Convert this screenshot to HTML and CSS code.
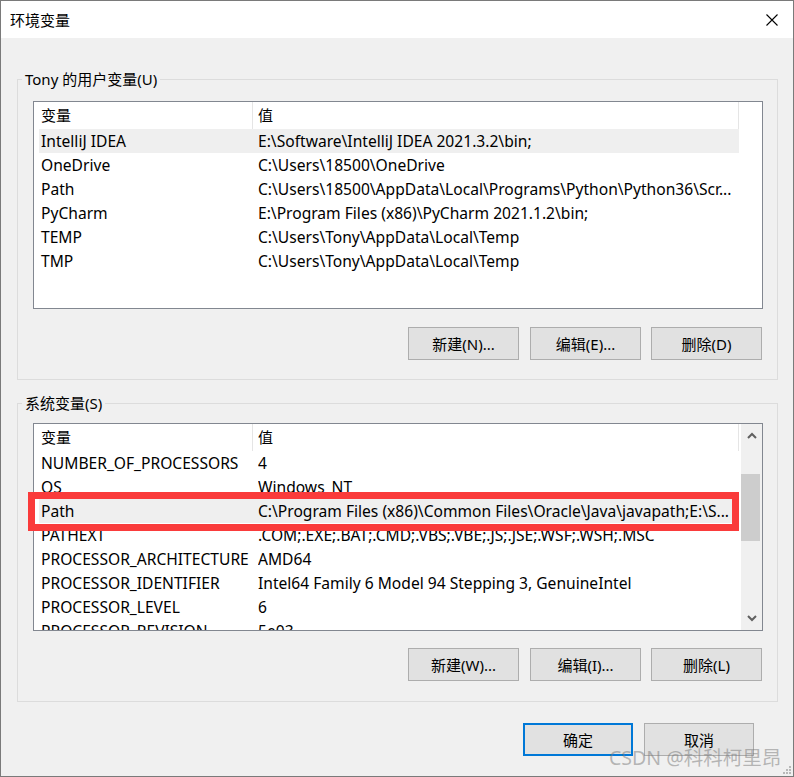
FILE: index.html
```html
<!DOCTYPE html>
<html lang="zh-CN">
<head>
<meta charset="utf-8">
<title>环境变量</title>
<link rel="stylesheet" href="styles.css">
</head>
<body>
<div class="window">
  <div class="titlebar">
    <span class="title">环境变量</span>
    <span class="close">
      <svg width="12" height="12" viewBox="0 0 12 12"><path d="M0.5 0.5 L11.5 11.5 M11.5 0.5 L0.5 11.5" stroke="#000" stroke-width="1.1" fill="none"/></svg>
    </span>
  </div>
  <div class="content">
    <fieldset class="group group-user">
      <legend>Tony 的用户变量(U)</legend>
      <div class="list">
        <div class="rows">
          <div class="head"><div class="h-name">变量</div><div class="h-val">值</div></div>
          <div class="row sel"><div class="c-name">IntelliJ IDEA</div><div class="c-val">E:\Software\IntelliJ IDEA 2021.3.2\bin;</div></div>
          <div class="row"><div class="c-name">OneDrive</div><div class="c-val">C:\Users\18500\OneDrive</div></div>
          <div class="row"><div class="c-name">Path</div><div class="c-val">C:\Users\18500\AppData\Local\Programs\Python\Python36\Scr...</div></div>
          <div class="row"><div class="c-name">PyCharm</div><div class="c-val">E:\Program Files (x86)\PyCharm 2021.1.2\bin;</div></div>
          <div class="row"><div class="c-name">TEMP</div><div class="c-val">C:\Users\Tony\AppData\Local\Temp</div></div>
          <div class="row"><div class="c-name">TMP</div><div class="c-val">C:\Users\Tony\AppData\Local\Temp</div></div>
        </div>
      </div>
      <div class="btns">
        <button class="btn">新建(N)...</button>
        <button class="btn">编辑(E)...</button>
        <button class="btn">删除(D)</button>
      </div>
    </fieldset>

    <fieldset class="group group-sys">
      <legend>系统变量(S)</legend>
      <div class="list list-sys">
        <div class="rows">
          <div class="head"><div class="h-name">变量</div><div class="h-val">值</div></div>
          <div class="row"><div class="c-name">NUMBER_OF_PROCESSORS</div><div class="c-val">4</div></div>
          <div class="row"><div class="c-name">OS</div><div class="c-val">Windows_NT</div></div>
          <div class="row sel"><div class="c-name">Path</div><div class="c-val">C:\Program Files (x86)\Common Files\Oracle\Java\javapath;E:\S...</div></div>
          <div class="row"><div class="c-name">PATHEXT</div><div class="c-val">.COM;.EXE;.BAT;.CMD;.VBS;.VBE;.JS;.JSE;.WSF;.WSH;.MSC</div></div>
          <div class="row"><div class="c-name">PROCESSOR_ARCHITECTURE</div><div class="c-val">AMD64</div></div>
          <div class="row"><div class="c-name">PROCESSOR_IDENTIFIER</div><div class="c-val">Intel64 Family 6 Model 94 Stepping 3, GenuineIntel</div></div>
          <div class="row"><div class="c-name">PROCESSOR_LEVEL</div><div class="c-val">6</div></div>
          <div class="row"><div class="c-name">PROCESSOR_REVISION</div><div class="c-val">5e03</div></div>
        </div>
        <div class="vscroll">
          <div class="arrow">
            <svg width="10" height="7" viewBox="0 0 10 7"><path d="M1 6 L5 2 L9 6" stroke="#606060" stroke-width="2" fill="none"/></svg>
          </div>
          <div class="track"><div class="thumb"></div></div>
          <div class="arrow">
            <svg width="10" height="7" viewBox="0 0 10 7"><path d="M1 1 L5 5 L9 1" stroke="#606060" stroke-width="2" fill="none"/></svg>
          </div>
        </div>
        <div class="redbox"></div>
      </div>
      <div class="btns">
        <button class="btn">新建(W)...</button>
        <button class="btn">编辑(I)...</button>
        <button class="btn">删除(L)</button>
      </div>
    </fieldset>

    <div class="footer">
      <button class="btn btn-foot btn-default">确定</button>
      <button class="btn btn-foot">取消</button>
    </div>
  </div>
  <div class="watermark">CSDN @科科柯里昂</div>
  <div class="grip">
    <svg width="10" height="10" viewBox="0 0 10 10" fill="#b8b8b8">
      <rect x="7" y="1" width="2" height="2"/>
      <rect x="4" y="4" width="2" height="2"/><rect x="7" y="4" width="2" height="2"/>
      <rect x="1" y="7" width="2" height="2"/><rect x="4" y="7" width="2" height="2"/><rect x="7" y="7" width="2" height="2"/>
    </svg>
  </div>
</div>
</body>
</html>
```

FILE: styles.css
```css
* { box-sizing: border-box; }

html, body {
  margin: 0;
  padding: 0;
  background: #f0f0f0;
}

body {
  font-family: "Noto Sans", "Noto Sans CJK SC", sans-serif;
  font-size: 15px;
  color: #000;
}

.window {
  position: relative;
  width: 794px;
  height: 777px;
  border: 1px solid #7a7a7a;
  background: #f0f0f0;
  overflow: hidden;
}

.titlebar {
  height: 37px;
  background: #fff;
  display: flex;
  align-items: center;
  justify-content: space-between;
  padding: 0 15px 0 9px;
}

.title {
  font-size: 15px;
  line-height: 20px;
}

.close {
  display: flex;
  align-items: center;
  margin-top: 1px;
}

.content {
  display: flex;
  flex-direction: column;
}

.group {
  margin: 0 15px 0 16px;
  width: 761px;
  min-width: 0;
  border: 1px solid #dcdcdc;
  padding: 12px 14px 19px 15px;
}

.group legend {
  margin-left: -11px;
  padding: 0 3px;
  line-height: 20px;
  font-size: 15px;
}

.group-user {
  margin-top: 31px;
}

.group-sys {
  margin-top: 13px;
  padding-top: 10px;
  padding-bottom: 20px;
}

.list {
  position: relative;
  height: 208px;
  background: #fff;
  border: 1px solid #828790;
  display: flex;
}

.rows {
  flex: 1;
  overflow: hidden;
  padding-left: 5px;
}

.head {
  display: flex;
  width: 700px;
  height: 27px;
  line-height: 27px;
}

.h-name {
  width: 214px;
  padding-left: 2px;
  border-right: 1px solid #e5e5e5;
}

.h-val {
  flex: 1;
  padding-left: 5px;
  border-right: 1px solid #e5e5e5;
}

.row {
  display: flex;
  width: 700px;
  height: 24px;
  line-height: 24px;
  white-space: nowrap;
  font-size: 15.6px;
}

.row.sel {
  background: #efefef;
}

.c-name {
  width: 219px;
  padding-left: 2px;
  overflow: hidden;
}

.c-val {
  flex: 1;
  overflow: hidden;
}

.vscroll {
  width: 21px;
  background: #f0f0f0;
  display: flex;
  flex-direction: column;
}

.arrow {
  height: 23px;
  display: flex;
  align-items: center;
  justify-content: center;
}

.track {
  flex: 1;
  padding-top: 27px;
}

.thumb {
  width: 19px;
  height: 67px;
  background: #cdcdcd;
}

.redbox {
  position: absolute;
  left: -6px;
  top: 68px;
  width: 711px;
  height: 39px;
  border: 7px solid #fa3b3b;
}

.btns {
  display: flex;
  justify-content: flex-end;
  margin-top: 18px;
  padding-right: 1px;
}

.btns .btn + .btn {
  margin-left: 10px;
}

.btns .btn:nth-child(2) {
  margin-left: 11px;
}

.group-sys .btns {
  margin-top: 17px;
}

.btn {
  width: 111px;
  height: 33px;
  background: #e1e1e1;
  border: 1px solid #adadad;
  font-family: inherit;
  font-size: 15px;
  color: #000;
  padding: 0;
  margin: 0;
}

.footer {
  display: flex;
  justify-content: flex-end;
  gap: 11px;
  margin-top: 21px;
  padding-right: 39px;
}

.btn-foot {
  width: 110px;
}

.btn-default {
  border: 2px solid #0078d7;
}

.watermark {
  position: absolute;
  left: 608px;
  top: 745px;
  font-size: 19.5px;
  line-height: 24px;
  color: rgba(120, 120, 120, 0.5);
  white-space: nowrap;
}

.grip {
  position: absolute;
  right: 1px;
  bottom: 1px;
  width: 10px;
  height: 10px;
  display: flex;
}
```
